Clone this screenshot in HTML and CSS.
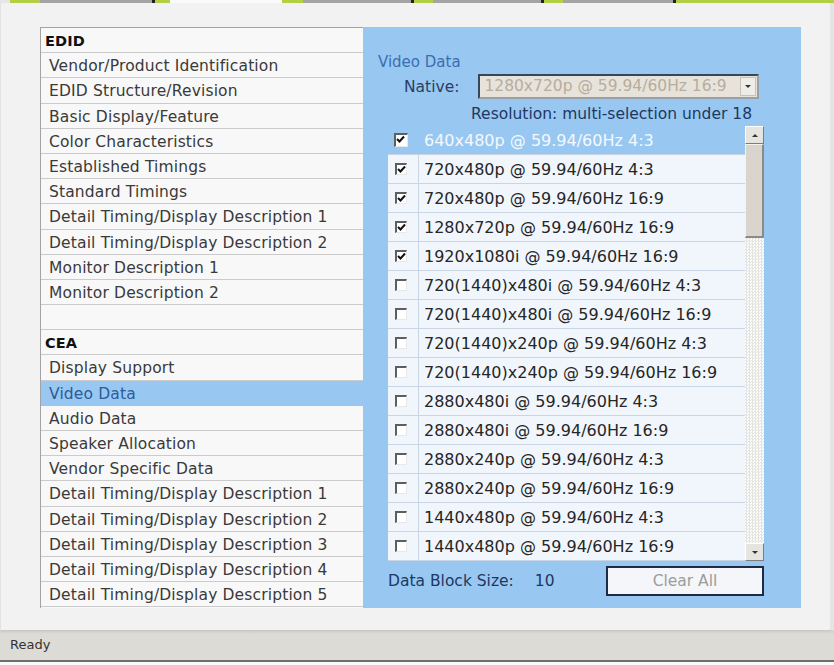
FILE: index.html
```html
<!DOCTYPE html>
<html lang="en">
  <head>
    <meta charset="UTF-8" />
    <title>EDID Editor</title>
    <link rel="stylesheet" href="styles.css">
  </head>
  <body>
    <!-- tab strip edge -->
    <div class="tabstrip"></div>

    <div class="page">
      <div class="editor">
        <!-- block navigation -->
        <ul class="nav">
          <li class="nav-head">EDID</li>
          <li>Vendor/Product Identification</li>
          <li>EDID Structure/Revision</li>
          <li>Basic Display/Feature</li>
          <li>Color Characteristics</li>
          <li>Established Timings</li>
          <li>Standard Timings</li>
          <li>Detail Timing/Display Description 1</li>
          <li>Detail Timing/Display Description 2</li>
          <li>Monitor Description 1</li>
          <li>Monitor Description 2</li>
          <li class="nav-blank"></li>
          <li class="nav-head">CEA</li>
          <li>Display Support</li>
          <li class="active">Video Data</li>
          <li>Audio Data</li>
          <li>Speaker Allocation</li>
          <li>Vendor Specific Data</li>
          <li>Detail Timing/Display Description 1</li>
          <li>Detail Timing/Display Description 2</li>
          <li>Detail Timing/Display Description 3</li>
          <li>Detail Timing/Display Description 4</li>
          <li>Detail Timing/Display Description 5</li>
        </ul>

        <!-- video data block -->
        <div class="detail">
          <div class="detail-title">Video Data</div>
          <div class="native-row">
            <span class="native-label">Native:</span>
            <div class="select">
              <span class="select-value">1280x720p @ 59.94/60Hz 16:9</span>
              <span class="select-btn"><span class="arrow-down"></span></span>
            </div>
          </div>
          <div class="hint">Resolution: multi-selection under 18</div>

          <div class="list">
            <div class="rows">
              <div class="row selected"><span class="cell-check"><span class="box checked"></span></span><span class="cell-text">640x480p @ 59.94/60Hz 4:3</span></div>
              <div class="row"><span class="cell-check"><span class="box checked"></span></span><span class="cell-text">720x480p @ 59.94/60Hz 4:3</span></div>
              <div class="row"><span class="cell-check"><span class="box checked"></span></span><span class="cell-text">720x480p @ 59.94/60Hz 16:9</span></div>
              <div class="row"><span class="cell-check"><span class="box checked"></span></span><span class="cell-text">1280x720p @ 59.94/60Hz 16:9</span></div>
              <div class="row"><span class="cell-check"><span class="box checked"></span></span><span class="cell-text">1920x1080i @ 59.94/60Hz 16:9</span></div>
              <div class="row"><span class="cell-check"><span class="box"></span></span><span class="cell-text">720(1440)x480i @ 59.94/60Hz 4:3</span></div>
              <div class="row"><span class="cell-check"><span class="box"></span></span><span class="cell-text">720(1440)x480i @ 59.94/60Hz 16:9</span></div>
              <div class="row"><span class="cell-check"><span class="box"></span></span><span class="cell-text">720(1440)x240p @ 59.94/60Hz 4:3</span></div>
              <div class="row"><span class="cell-check"><span class="box"></span></span><span class="cell-text">720(1440)x240p @ 59.94/60Hz 16:9</span></div>
              <div class="row"><span class="cell-check"><span class="box"></span></span><span class="cell-text">2880x480i @ 59.94/60Hz 4:3</span></div>
              <div class="row"><span class="cell-check"><span class="box"></span></span><span class="cell-text">2880x480i @ 59.94/60Hz 16:9</span></div>
              <div class="row"><span class="cell-check"><span class="box"></span></span><span class="cell-text">2880x240p @ 59.94/60Hz 4:3</span></div>
              <div class="row"><span class="cell-check"><span class="box"></span></span><span class="cell-text">2880x240p @ 59.94/60Hz 16:9</span></div>
              <div class="row"><span class="cell-check"><span class="box"></span></span><span class="cell-text">1440x480p @ 59.94/60Hz 4:3</span></div>
              <div class="row"><span class="cell-check"><span class="box"></span></span><span class="cell-text">1440x480p @ 59.94/60Hz 16:9</span></div>
            </div>
            <div class="scrollbar">
              <span class="sb-btn"><span class="arrow-up"></span></span>
              <span class="sb-thumb"></span>
              <span class="sb-track"></span>
              <span class="sb-btn"><span class="arrow-down"></span></span>
            </div>
          </div>

          <div class="footer">
            <span class="size-label">Data Block Size:</span>
            <span class="size-value">10</span>
            <button class="clear-btn" type="button">Clear All</button>
          </div>
        </div>
      </div>
    </div>

    <div class="statusbar">Ready</div>
  </body>
</html>
```

FILE: styles.css
```css
:root {
  --panel-blue: #98c8f1;
  --row-bg: #f1f6fc;
  --row-line: #c9d5e2;
  --nav-bg: #f8f8f8;
  --nav-line: #cbcbcb;
  --navy: #1f3761;
  --window: #f2f2f2;
}

* {
  margin: 0;
  padding: 0;
  box-sizing: border-box;
}

body {
  width: 834px;
  height: 665px;
  display: flex;
  flex-direction: column;
  background: #fafafa;
  font-family: "DejaVu Sans", Verdana, sans-serif;
  color: #333;
  overflow: hidden;
}

.tabstrip {
  height: 3px;
  flex: none;
  background: linear-gradient(to right,
    #e6e6e6 0 10px, #b3cf46 10px 40px, #a4a4a4 40px 152px,
    #222 152px 155px, #b3cf46 155px 170px, #fafafa 170px 282px,
    #b3cf46 282px 303px, #a4a4a4 303px 411px, #222 411px 414px,
    #b3cf46 414px 433px, #a4a4a4 433px 541px, #222 541px 544px,
    #b3cf46 544px 563px, #a4a4a4 563px 673px, #222 673px 676px,
    #b3cf46 676px 834px);
}

.page {
  flex: 1;
  background: var(--window);
  padding: 24px 0 0 39px;
  border-left: 1px solid #e2e2e2;
  border-right: 4px solid #e4e4e4;
  border-bottom: 1px solid #c8c8c8;
}

.editor {
  display: flex;
  width: 761px;
  height: 581px;
}

/* navigation list */
.nav {
  list-style: none;
  width: 323px;
  flex: none;
  border-top: 1px solid #a3a3a3;
  border-left: 1px solid #a3a3a3;
  background: var(--nav-bg);
}

.nav li {
  height: 25.2px;
  line-height: 26px;
  padding-left: 8px;
  font-size: 15.5px;
  letter-spacing: 0.15px;
  color: #3a3a3a;
  border-bottom: 1px solid var(--nav-line);
  white-space: nowrap;
}

.nav .nav-head {
  padding-left: 4px;
  font-weight: bold;
  font-size: 14.5px;
  color: #111;
}

.nav .active {
  background: var(--panel-blue);
  color: #2b5b99;
  border-bottom-color: var(--panel-blue);
}

/* detail panel */
.detail {
  flex: 1;
  background: var(--panel-blue);
  padding: 26px 38px 0 25px;
  display: flex;
  flex-direction: column;
}

.detail-title {
  margin-left: -10px;
  height: 18px;
  font-size: 15px;
  color: #3b6eb0;
}

.native-row {
  display: flex;
  align-items: center;
  margin-top: 3px;
  margin-left: 16px;
  gap: 19px;
}

.native-label {
  font-size: 15.5px;
  color: #2a3e66;
}

.select {
  display: flex;
  width: 281px;
  height: 25px;
  border: 2px solid #39455a;
  border-right-color: #9aa0a8;
  border-bottom-color: #9aa0a8;
  background: #e7e3db;
}

.select-value {
  flex: 1;
  padding-left: 4px;
  line-height: 21px;
  font-size: 15.5px;
  color: #b6ad9d;
  white-space: nowrap;
  overflow: hidden;
}

.select-btn {
  width: 16px;
  flex: none;
  margin: 1px;
  background: #eeede8;
  border: 1px solid #c4c2bc;
  display: flex;
  align-items: center;
  justify-content: center;
}

.arrow-down,
.arrow-up {
  width: 0;
  height: 0;
  border-left: 3px solid transparent;
  border-right: 3px solid transparent;
}

.arrow-down {
  border-top: 3px solid #333;
}

.arrow-up {
  border-bottom: 3px solid #333;
}

.hint {
  margin-top: 6px;
  height: 18px;
  text-align: right;
  padding-right: 11px;
  font-size: 15.5px;
  color: var(--navy);
  white-space: nowrap;
}

/* resolution list */
.list {
  display: flex;
  height: 435px;
  margin-top: 3px;
}

.rows {
  flex: 1;
}

.row {
  display: flex;
  height: 29px;
  background: var(--row-bg);
  border-bottom: 1px solid var(--row-line);
}

.row.selected {
  background: transparent;
  border-bottom-color: var(--row-line);
}

.cell-check {
  width: 31px;
  flex: none;
  display: flex;
  align-items: center;
  justify-content: center;
  border-right: 1px solid var(--row-line);
}

.row.selected .cell-check {
  border-right-color: transparent;
}

.box {
  width: 12px;
  height: 12px;
  border-top: 2px solid #5e5e5e;
  border-left: 2px solid #5e5e5e;
  border-right: 1px solid #e8e8e8;
  border-bottom: 1px solid #e8e8e8;
  background: #fff;
  margin-left: -4px;
}

.box.checked {
  background: #fff url("data:image/svg+xml;utf8,<svg xmlns='http://www.w3.org/2000/svg' width='9' height='9'><polyline points='1,4 3.5,6.5 8,1.5' fill='none' stroke='%23111' stroke-width='2'/></svg>") no-repeat 0 0;
}

.row.selected .box {
  width: 14px;
  height: 14px;
}

.cell-text {
  padding-left: 5px;
  line-height: 30px;
  font-size: 16px;
  color: #262626;
  white-space: nowrap;
}

.row.selected .cell-text {
  color: #f4f8fd;
}

.scrollbar {
  width: 19px;
  flex: none;
  display: flex;
  flex-direction: column;
  margin-right: -1px;
}

.sb-btn {
  height: 18px;
  flex: none;
  background: #e6e4de;
  border: 1px solid #fff;
  border-right-color: #7d7d7d;
  border-bottom-color: #7d7d7d;
  display: flex;
  align-items: center;
  justify-content: center;
}

.sb-thumb {
  height: 94px;
  flex: none;
  background: #d9d5cd;
  border-top: 1px solid #f4f2ee;
  border-left: 1px solid #f4f2ee;
  border-right: 2px solid #8c8a86;
  border-bottom: 2px solid #8c8a86;
}

.sb-track {
  flex: 1;
  background-color: #fff;
  background-image: repeating-conic-gradient(#e4e4e0 0 25%, #fbfbfb 0 50%);
  background-size: 3px 3px;
}

/* footer row */
.footer {
  display: flex;
  align-items: center;
  margin-top: 5px;
  font-size: 15.5px;
  color: var(--navy);
}

.size-value {
  margin-left: 21px;
}

.clear-btn {
  margin-left: auto;
  margin-right: -1px;
  width: 158px;
  height: 30px;
  border: 2px solid #1f2b45;
  background: #f4f6f9;
  color: #9c9c9c;
  font-family: "DejaVu Sans", Verdana, sans-serif;
  font-size: 15.5px;
}

.statusbar {
  height: 31px;
  flex: none;
  padding-left: 10px;
  line-height: 28px;
  font-size: 13px;
  color: #333;
  background: linear-gradient(#cfcdc8, #dddbd6 3px);
  border-bottom: 2px solid #6e6e6e;
  margin-bottom: 3px;
}
```
